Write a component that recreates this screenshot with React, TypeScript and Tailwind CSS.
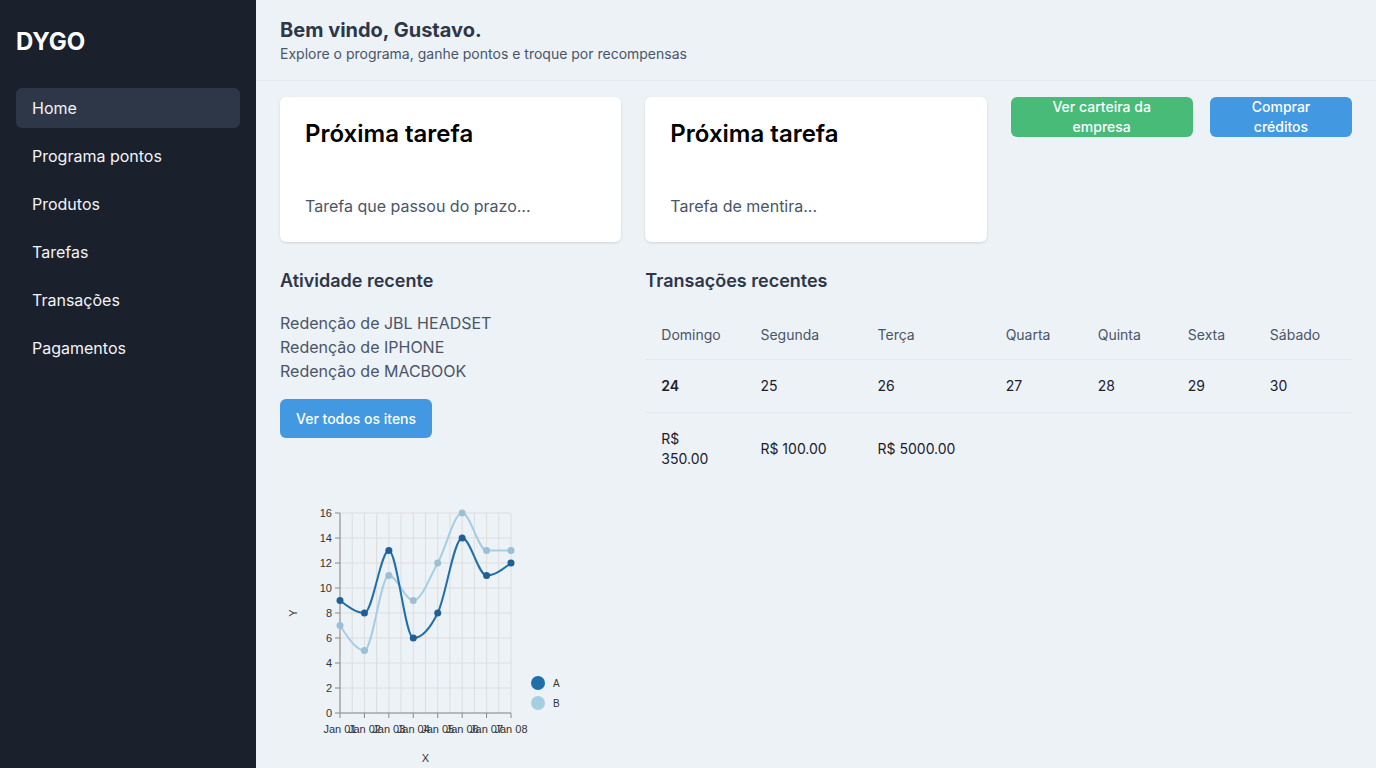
import React from 'react';

const navItems = ['Home', 'Programa pontos', 'Produtos', 'Tarefas', 'Transações', 'Pagamentos'];
const activity = ['Redenção de JBL HEADSET', 'Redenção de IPHONE', 'Redenção de MACBOOK'];
const days = ['Domingo', 'Segunda', 'Terça', 'Quarta', 'Quinta', 'Sexta', 'Sábado'];
const dates = ['24', '25', '26', '27', '28', '29', '30'];
const colWidths = [99, 117, 128, 92, 90, 82, 98];

const seriesA = [9, 8, 13, 6, 8, 14, 11, 12];
const seriesB = [7, 5, 11, 9, 12, 16, 13, 13];

// plot area inside the chart svg
const left = 60;
const right = 231;
const top = 43;
const bottom = 243;
const step = (right - left) / 7;
const px = (i: number) => left + i * step;
const py = (v: number) => bottom - v * ((bottom - top) / 16);

// monotone cubic like d3.curveMonotoneX
const monotonePath = (values: number[]) => {
  const pts = values.map((v, i) => [px(i), py(v)]);
  const n = pts.length;
  const s: number[] = [];
  for (let i = 0; i < n - 1; i++) {
    s.push((pts[i + 1][1] - pts[i][1]) / (pts[i + 1][0] - pts[i][0]));
  }
  const t: number[] = new Array(n).fill(0);
  for (let i = 1; i < n - 1; i++) {
    const h0 = pts[i][0] - pts[i - 1][0];
    const h1 = pts[i + 1][0] - pts[i][0];
    const s0 = s[i - 1];
    const s1 = s[i];
    const p = (s0 * h1 + s1 * h0) / (h0 + h1);
    t[i] = (Math.sign(s0) + Math.sign(s1)) * Math.min(Math.abs(s0), Math.abs(s1), 0.5 * Math.abs(p)) || 0;
  }
  t[0] = (3 * s[0] - t[1]) / 2;
  t[n - 1] = (3 * s[n - 2] - t[n - 2]) / 2;
  let d = `M${pts[0][0]},${pts[0][1]}`;
  for (let i = 0; i < n - 1; i++) {
    const dx = (pts[i + 1][0] - pts[i][0]) / 3;
    d += ` C${pts[i][0] + dx},${pts[i][1] + dx * t[i]} ${pts[i + 1][0] - dx},${pts[i + 1][1] - dx * t[i + 1]} ${pts[i + 1][0]},${pts[i + 1][1]}`;
  }
  return d;
};

const LineChart = () => {
  const yTicks = [0, 2, 4, 6, 8, 10, 12, 14, 16];
  const vLines = Array.from({ length: 15 }, (_, i) => left + (i * step) / 2);
  return (
    <svg width="300" height="296" className="mt-8 block" style={{ fontFamily: 'Liberation Sans, Arial, sans-serif' }}>
      {vLines.map((x) => (
        <line key={x} x1={x} x2={x} y1={top} y2={bottom} stroke="#dddddd" strokeWidth="1" />
      ))}
      {yTicks.map((v) => (
        <line key={v} x1={left} x2={right} y1={py(v)} y2={py(v)} stroke="#dddddd" strokeWidth="1" />
      ))}
      {/* axes */}
      <line x1={left} x2={left} y1={top} y2={bottom} stroke="#888" />
      <line x1={left} x2={right} y1={bottom} y2={bottom} stroke="#888" />
      {yTicks.map((v) => (
        <g key={v}>
          <line x1={left - 5} x2={left} y1={py(v)} y2={py(v)} stroke="#888" />
          <text x={left - 8} y={py(v) + 4} fontSize="11" fill="#333" textAnchor="end">
            {v}
          </text>
        </g>
      ))}
      {seriesA.map((_, i) => (
        <g key={i}>
          <line x1={px(i)} x2={px(i)} y1={bottom} y2={bottom + 5} stroke="#888" />
          <text x={px(i)} y={bottom + 20} fontSize="11" fill="#333" textAnchor="middle">
            {`Jan 0${i + 1}`}
          </text>
        </g>
      ))}
      <text x={(left + right) / 2} y={292} fontSize="11" fill="#333" textAnchor="middle">
        X
      </text>
      <text x={17} y={(top + bottom) / 2} fontSize="11" fill="#333" textAnchor="middle" transform={`rotate(-90 17 ${(top + bottom) / 2})`}>
        Y
      </text>

      <path d={monotonePath(seriesB)} fill="none" stroke="#a6cee3" strokeWidth="2" />
      {seriesB.map((v, i) => (
        <circle key={i} cx={px(i)} cy={py(v)} r="3.5" fill="#9ebfd3" />
      ))}
      <path d={monotonePath(seriesA)} fill="none" stroke="#1f6fab" strokeWidth="2" />
      {seriesA.map((v, i) => (
        <circle key={i} cx={px(i)} cy={py(v)} r="3.5" fill="#1f5f96" />
      ))}

      <circle cx="258" cy="213" r="7" fill="#1f6fab" />
      <text x="273" y="216.5" fontSize="10" fill="#333">
        A
      </text>
      <circle cx="258" cy="233" r="7" fill="#a6cee3" />
      <text x="273" y="236.5" fontSize="10" fill="#333">
        B
      </text>
    </svg>
  );
};

const TaskCard = ({ text }: { text: string }) => (
  <div className="flex h-[145px] flex-col justify-between rounded-md bg-white pb-6 pl-[25px] pr-6 pt-[21px] shadow-sm">
    <h2 className="text-2xl font-semibold leading-8 text-black">Próxima tarefa</h2>
    <p className="text-base leading-6 text-[#4a5568]">{text}</p>
  </div>
);

const App = () => {
  return (
    <div className="flex h-screen overflow-hidden bg-[#edf2f7]" style={{ fontFamily: 'Inter, "Noto Sans", sans-serif' }}>
      {/* Sidebar */}
      <aside className="w-64 shrink-0 bg-[#1a202c] px-4">
        <div className="flex h-[80px] items-center pt-1 text-2xl font-bold text-white">DYGO</div>
        <nav className="mt-2 flex flex-col gap-2">
          {navItems.map((item, i) => (
            <a
              key={item}
              href="#"
              className={`flex h-10 items-center rounded-md px-4 text-base text-gray-100 ${i === 0 ? 'bg-[#2d3748]' : ''}`}
            >
              {item}
            </a>
          ))}
        </nav>
      </aside>

      {/* Main */}
      <main className="flex min-w-0 flex-1 flex-col">
        <header className="border-b border-[#e2e8f0] px-6 py-4">
          <h1 className="text-xl font-bold leading-7 text-[#2d3748]">Bem vindo, Gustavo.</h1>
          <p className="text-sm leading-5 text-[#4a5568]">Explore o programa, ganhe pontos e troque por recompensas</p>
        </header>

        <div className="grid grid-cols-3 gap-x-6 gap-y-[25px] px-6 pt-4">
          <TaskCard text="Tarefa que passou do prazo..." />
          <TaskCard text="Tarefa de mentira..." />
          <div className="flex items-start justify-between">
            <button className="h-10 w-[182px] rounded-md bg-[#48bb78] px-4 text-sm font-medium leading-5 text-white">
              Ver carteira da empresa
            </button>
            <button className="h-10 w-[142px] rounded-md bg-[#4299e1] px-4 text-sm font-medium leading-5 text-white">
              Comprar créditos
            </button>
          </div>

          {/* Recent activity */}
          <section>
            <h3 className="text-lg font-semibold leading-7 text-[#2d3748]">Atividade recente</h3>
            <ul className="mt-4 text-base leading-6 text-[#4a5568]">
              {activity.map((a) => (
                <li key={a}>{a}</li>
              ))}
            </ul>
            <button className="mt-4 h-[39px] rounded-md bg-[#4299e1] px-4 text-sm font-medium text-white">
              Ver todos os itens
            </button>
            <LineChart />
          </section>

          {/* Recent transactions */}
          <section className="col-span-2">
            <h3 className="text-lg font-semibold leading-7 text-[#2d3748]">Transações recentes</h3>
            <table className="mt-4 w-full table-fixed text-left text-sm">
              <colgroup>
                {colWidths.map((w, i) => (
                  <col key={i} style={{ width: w }} />
                ))}
              </colgroup>
              <thead>
                <tr className="border-b border-[#e2e8f0]">
                  {days.map((d) => (
                    <th key={d} className="h-12 px-4 font-normal text-[#4a5568]">
                      {d}
                    </th>
                  ))}
                </tr>
              </thead>
              <tbody className="text-[#1a202c]">
                <tr className="border-b border-[#e2e8f0]">
                  {dates.map((d, i) => (
                    <td key={d} className={`px-4 py-4 leading-5 ${i === 0 ? 'font-semibold' : ''}`}>
                      {d}
                    </td>
                  ))}
                </tr>
                <tr>
                  <td className="px-4 py-4 leading-5">
                    <span className="inline-block w-[50px]">R$ 350.00</span>
                  </td>
                  <td className="px-4 py-4 leading-5">R$ 100.00</td>
                  <td className="px-4 py-4 leading-5">R$ 5000.00</td>
                  <td />
                  <td />
                  <td />
                  <td />
                </tr>
              </tbody>
            </table>
          </section>
        </div>
      </main>
    </div>
  );
};

export default App;
